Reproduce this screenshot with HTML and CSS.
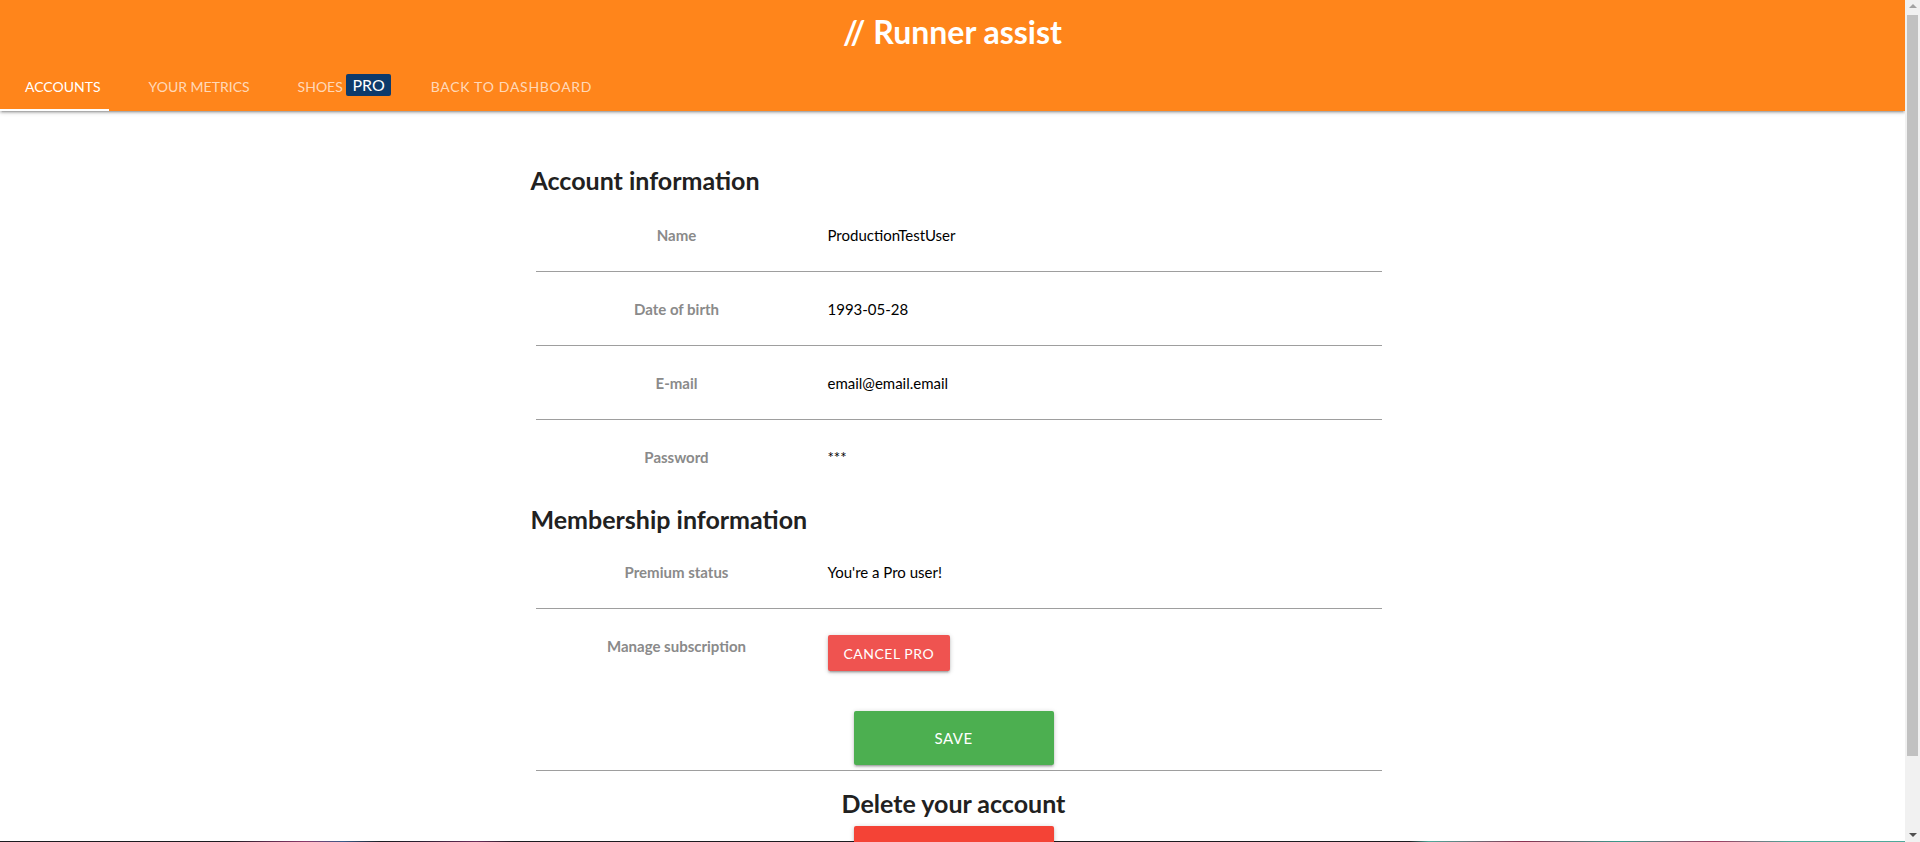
FILE: index.html
```html
<!DOCTYPE html>
<html lang="en">
<head>
<meta charset="utf-8">
<title>Runner assist</title>
<link rel="stylesheet" href="styles.css">
</head>
<body>
<div class="page">
  <header class="topbar">
    <div class="brand">// Runner assist</div>
    <nav class="tabs">
      <a class="tab active" href="#">Accounts</a>
      <a class="tab" href="#">Your metrics</a>
      <a class="tab tab-shoes" href="#">Shoes <span class="badge">PRO</span></a>
      <a class="tab tab-back" href="#">Back to dashboard</a>
      <span class="indicator"></span>
    </nav>
  </header>

  <main class="content">
    <h2 class="section-title">Account information</h2>
    <div class="info-table">
      <div class="row first">
        <div class="label">Name</div>
        <div class="value">ProductionTestUser</div>
      </div>
      <div class="row">
        <div class="label">Date of birth</div>
        <div class="value">1993-05-28</div>
      </div>
      <div class="row">
        <div class="label">E-mail</div>
        <div class="value">email@email.email</div>
      </div>
      <div class="row last">
        <div class="label">Password</div>
        <div class="value">***</div>
      </div>
    </div>

    <h2 class="section-title second">Membership information</h2>
    <div class="info-table">
      <div class="row">
        <div class="label">Premium status</div>
        <div class="value">You're a Pro user!</div>
      </div>
      <div class="row last manage">
        <div class="label">Manage subscription</div>
        <div class="value"><button class="btn btn-cancel">Cancel Pro</button></div>
      </div>
    </div>

    <div class="save-row">
      <button class="btn btn-large btn-save">Save</button>
    </div>

    <h2 class="delete-title">Delete your account</h2>
    <div class="delete-row">
      <button class="btn btn-large btn-delete"></button>
    </div>
  </main>
</div>
<footer class="backdrop"></footer>

<div class="scrollbar">
  <span class="arrow up"></span>
  <span class="thumb"></span>
  <span class="arrow down"></span>
</div>
</body>
</html>
```

FILE: styles.css
```css
html, body {
  margin: 0;
  padding: 0;
}

body {
  font-family: "Lato", "Open Sans", sans-serif;
  background: #1c1b20;
  color: rgba(0, 0, 0, 0.87);
  width: calc(100% - 15px);
}

.page {
  height: 841px;
  background: #ffffff;
  position: relative;
  z-index: 1;
}

.topbar {
  background: #ff851b;
  color: #fff;
  box-shadow: 0 2px 2px 0 rgba(0,0,0,0.14), 0 3px 1px -2px rgba(0,0,0,0.12), 0 1px 5px 0 rgba(0,0,0,0.2);
  position: relative;
  z-index: 2;
}

.brand {
  height: 63px;
  line-height: 63px;
  text-align: center;
  font-size: 32px;
  font-weight: 700;
}

.tabs {
  display: flex;
  height: 48px;
  position: relative;
  padding-left: 1px;
}

.tab {
  display: block;
  padding: 0 24px;
  line-height: 48px;
  font-size: 14px;
  text-transform: uppercase;
  text-decoration: none;
  color: rgba(255, 255, 255, 0.7);
  white-space: nowrap;
}

.tab.tab-shoes {
  padding-right: 16px;
}

.tab.tab-back {
  letter-spacing: 0.7px;
}

.tab.active {
  color: #fff;
}

.badge {
  display: inline-block;
  background: #0d3a6b;
  color: #fff;
  font-size: 16px;
  line-height: 22px;
  height: 22px;
  padding: 0 6px;
  border-radius: 2px;
  vertical-align: 1px;
  letter-spacing: 0;
}

.indicator {
  position: absolute;
  left: 0;
  bottom: 0;
  width: 109px;
  height: 2px;
  background: #fff;
}

.content {
  width: 846px;
  margin-left: calc(50% - 422px);
}

.section-title {
  margin: 53px 0 0;
  font-size: 25px;
  line-height: 32px;
  font-weight: 700;
  color: #212121;
}

.section-title.second {
  margin-top: 10px;
}

.info-table {
  margin-left: 5px;
  width: 846px;
}

.row {
  display: grid;
  grid-template-columns: 282px 1fr;
  padding: 26px 0 25px;
  border-bottom: 1px solid #9e9e9e;
  line-height: 22px;
  font-size: 15px;
}

.row.first {
  padding-top: 28px;
}

.row.last {
  border-bottom: none;
}

.label {
  text-align: center;
  font-weight: 700;
  color: #8a8a8a;
}

.value {
  padding-left: 10px;
  color: #000;
}

.btn {
  border: none;
  border-radius: 2px;
  color: #fff;
  font-family: inherit;
  text-transform: uppercase;
  letter-spacing: 0.5px;
  cursor: pointer;
  box-shadow: 0 2px 2px 0 rgba(0,0,0,0.14), 0 3px 1px -2px rgba(0,0,0,0.12), 0 1px 5px 0 rgba(0,0,0,0.2);
}

.btn-cancel {
  height: 36px;
  padding: 0 16px;
  font-size: 14px;
  background: #ef5350;
}

.btn-large {
  width: 200px;
  height: 54px;
  font-size: 15px;
}

.save-row {
  display: flex;
  justify-content: center;
  padding: 15px 10px 5px 0;
  margin-left: 5px;
  width: 836px;
  border-bottom: 1px solid #9e9e9e;
}

.btn-save {
  background: #4caf50;
}

.delete-title {
  margin: 16px 0 0;
  text-align: center;
  font-size: 25px;
  line-height: 32px;
  font-weight: 700;
  color: #212121;
}

.delete-row {
  display: flex;
  justify-content: center;
  margin-top: 7px;
}

.btn-delete {
  background: #f44336;
}

.backdrop {
  height: 82px;
  background: linear-gradient(90deg, #1c1b20 0%, #1c1b20 12%, #5a2a4a 14%, #8a3a6a 16%, #3a5a8a 18%, #1c1b20 20%, #2a1f30 22%, #6a2d5a 25%, #1c1b20 27%, #1c1b20 74%, #4fa89a 75%, #8a3050 80%, #3a9a8c 85%, #a03a60 90%, #4fa89a 94%, #4fa89a 100%);
}

.scrollbar {
  position: fixed;
  top: 0;
  right: 0;
  width: 15px;
  height: 842px;
  background: #f1f1f1;
  z-index: 10;
}

.thumb {
  position: absolute;
  top: 15px;
  left: 2px;
  width: 11px;
  height: 741px;
  background: #c1c1c1;
}

.arrow {
  position: absolute;
  left: 4px;
  width: 0;
  height: 0;
  border-left: 4px solid transparent;
  border-right: 4px solid transparent;
}

.arrow.up {
  top: 4px;
  border-bottom: 4px solid #a3a3a3;
}

.arrow.down {
  bottom: 5px;
  border-top: 4px solid #505050;
}
```
